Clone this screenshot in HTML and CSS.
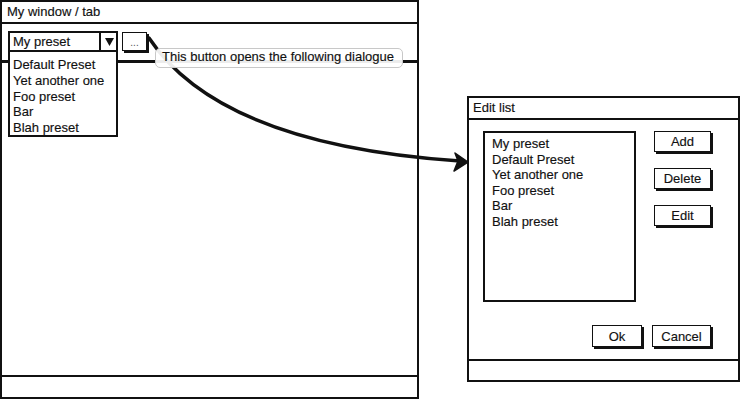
FILE: index.html
```html
<!DOCTYPE html>
<html lang="en">
<head>
<meta charset="utf-8">
<title>Mockup</title>
<link rel="stylesheet" href="styles.css">
</head>
<body>
<div class="canvas">
  <div class="window main-window">
    <div class="titlebar">My window / tab</div>
    <div class="content">
      <div class="toolbar">
        <div class="combo-wrap">
          <div class="combo">
            <span class="combo-value">My preset</span>
            <span class="combo-btn">
              <svg class="tri" viewBox="0 0 9 8" width="9" height="8"><polygon points="0,0 9,0 4.5,8" fill="#111"/></svg>
            </span>
          </div>
          <ul class="dropdown">
            <li>Default Preset</li>
            <li>Yet another one</li>
            <li>Foo preset</li>
            <li>Bar</li>
            <li>Blah preset</li>
          </ul>
        </div>
        <button class="btn btn-more">...</button>
      </div>
    </div>
    <div class="statusbar"></div>
  </div>

  <div class="window dialog">
    <div class="titlebar">Edit list</div>
    <div class="dialog-body">
      <div class="dialog-top">
        <ul class="listbox">
          <li>My preset</li>
          <li>Default Preset</li>
          <li>Yet another one</li>
          <li>Foo preset</li>
          <li>Bar</li>
          <li>Blah preset</li>
        </ul>
        <div class="side-buttons">
          <button class="btn btn-side">Add</button>
          <button class="btn btn-side">Delete</button>
          <button class="btn btn-side">Edit</button>
        </div>
      </div>
      <div class="dialog-footer">
        <button class="btn btn-ok">Ok</button>
        <button class="btn btn-cancel">Cancel</button>
      </div>
    </div>
    <div class="statusbar"></div>
  </div>

  <svg class="arrow" width="742" height="400" viewBox="0 0 742 400">
    <path d="M149,38 Q220,145 460,161" fill="none" stroke="#111" stroke-width="3.5" stroke-linecap="round"/>
    <polygon points="468,162 455,153 458,161 454,171" fill="#111" stroke="#111" stroke-width="1.5" stroke-linejoin="round"/>
  </svg>

  <div class="tooltip">This button opens the following dialogue</div>
</div>
</body>
</html>
```

FILE: styles.css
```css
* { box-sizing: border-box; }

html, body {
  margin: 0;
  padding: 0;
  background: #fff;
}

body {
  font-family: "Liberation Sans", Arial, sans-serif;
  font-size: 13px;
  color: #111;
  -webkit-text-stroke: 0.15px #111;
}

.canvas {
  position: relative;
  width: 742px;
  height: 400px;
  overflow: hidden;
}

.window {
  position: absolute;
  border: 2px solid #111;
  background: #fff;
  display: flex;
  flex-direction: column;
  z-index: 1;
}

.main-window {
  left: 0;
  top: 0;
  width: 419px;
  height: 399px;
}

.titlebar {
  height: 22px;
  border-bottom: 2px solid #111;
  line-height: 20px;
  padding-left: 5px;
  white-space: nowrap;
}

.dialog .titlebar {
  padding-left: 4px;
}

.content {
  flex: 1;
  position: relative;
}

.toolbar {
  height: 39px;
  border-bottom: 3px solid #111;
  padding: 7px 0 0 6px;
  display: flex;
  align-items: flex-start;
  gap: 4px;
}

.combo-wrap {
  position: relative;
  z-index: 2;
}

.combo {
  width: 110px;
  height: 21px;
  border: 2px solid #111;
  display: flex;
  background: #fff;
}

.combo-value {
  flex: 1;
  padding-left: 3px;
  line-height: 17px;
  white-space: nowrap;
}

.combo-btn {
  width: 17px;
  border-left: 2px solid #111;
  display: flex;
  align-items: center;
  justify-content: center;
}

.tri { display: block; margin-left: 1px; }

.dropdown {
  position: absolute;
  left: 0;
  top: 100%;
  width: 110px;
  height: 85px;
  margin: 0;
  padding: 5px 0 0 3px;
  list-style: none;
  border: 2px solid #111;
  border-top: 0;
  background: #fff;
  line-height: 15.75px;
  white-space: nowrap;
}

.btn {
  font: inherit;
  color: #111;
  background: #fff;
  border: 1.5px solid #111;
  box-shadow: 2px 2px 0 #111;
  padding: 0;
  margin: 0;
  text-align: center;
}

.btn-more {
  width: 25px;
  height: 19px;
  margin-top: 1px;
  font-size: 10px;
  line-height: 14px;
  color: #555;
  -webkit-text-stroke: 0;
  padding-top: 2px;
}

.statusbar {
  height: 22px;
  border-top: 2px solid #111;
}

.dialog {
  left: 467px;
  top: 96px;
  width: 273px;
  height: 286px;
}

.dialog .statusbar {
  height: 21px;
}

.dialog-body {
  flex: 1;
  padding: 11px 27px 0 14px;
  display: flex;
  flex-direction: column;
}

.dialog-top {
  display: flex;
  justify-content: space-between;
  align-items: flex-start;
}

.listbox {
  width: 153px;
  height: 171px;
  margin: 0;
  padding: 3px 0 0 7px;
  list-style: none;
  border: 2px solid #111;
  line-height: 15.6px;
  white-space: nowrap;
}

.side-buttons {
  display: flex;
  flex-direction: column;
  gap: 16px;
}

.btn-side {
  width: 57px;
  height: 21px;
  line-height: 18px;
}

.dialog-footer {
  margin-top: 23px;
  display: flex;
  justify-content: flex-end;
  gap: 10px;
}

.btn-ok {
  width: 50px;
  height: 22px;
  line-height: 19px;
}

.btn-cancel {
  width: 59px;
  height: 22px;
  line-height: 19px;
}

.arrow {
  position: absolute;
  left: 0;
  top: 0;
  z-index: 2;
  pointer-events: none;
}

.tooltip {
  position: absolute;
  left: 155px;
  top: 48px;
  width: 248px;
  height: 20px;
  z-index: 3;
  border: 1px solid #c8c8c8;
  border-radius: 5px;
  background: rgba(255, 255, 255, 0.92);
  padding-left: 6px;
  line-height: 16px;
  white-space: nowrap;
}
```
